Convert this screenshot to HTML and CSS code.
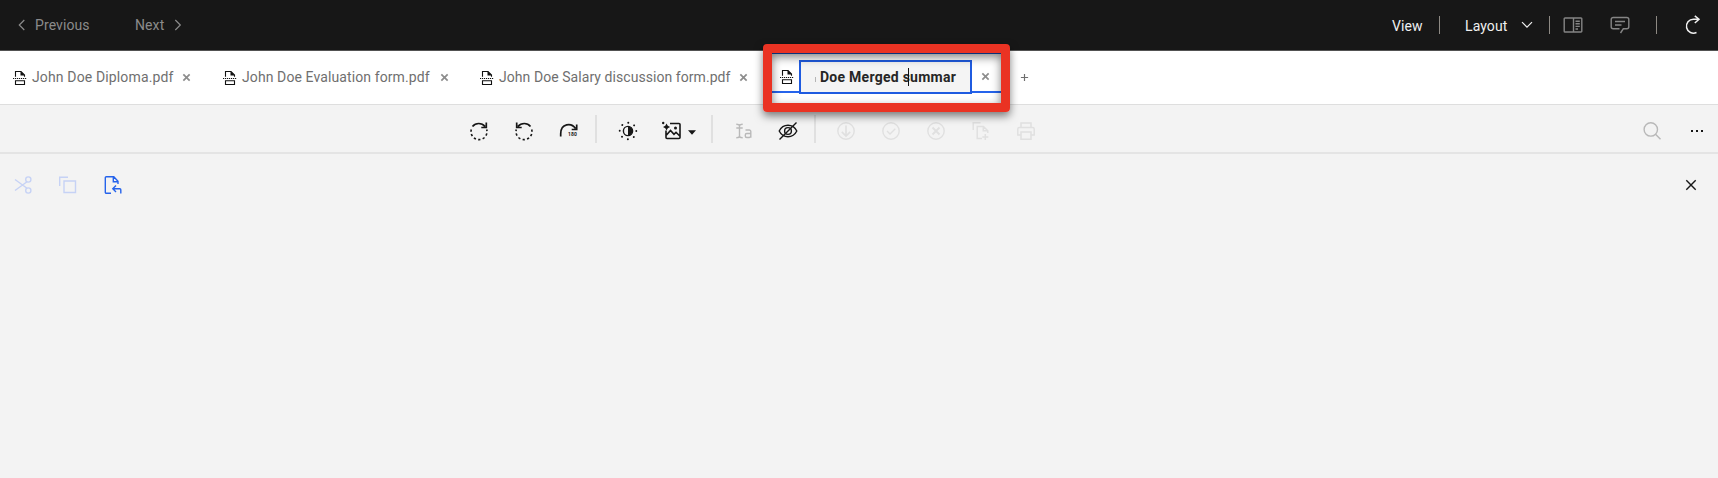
FILE: index.html
```html
<!DOCTYPE html>
<html lang="en">
<head>
<meta charset="utf-8">
<title>Document viewer</title>
<link rel="stylesheet" href="styles.css">
</head>
<body>
<svg class="defs" width="0" height="0" aria-hidden="true">
  <symbol id="split" viewBox="0 0 16 16">
    <path d="M3.500 6.800V1.500h5.500l3.500 3.500v1.800" fill="none" stroke="#111" stroke-width="1.100"/>
    <path d="M8.500 1l4.500 4.500H8.500z" fill="#111" stroke="none"/>
    <path d="M1 8.500h14" stroke="#111" stroke-width="1" stroke-dasharray="1.200 .8"/>
    <path d="M3.500 10.800v3.700h9v-3.700z" fill="none" stroke="#111" stroke-width="1.100"/>
  </symbol>
  <symbol id="x" viewBox="0 0 10 10"><path d="M1.500 1.500l7 7M8.500 1.500l-7 7" fill="none" stroke="currentColor" stroke-width="1.900"/></symbol>
</svg>

<header class="topbar">
  <nav class="pager">
    <svg class="chev" viewBox="0 0 8 12"><path d="M6.300 1L1.300 6l5 5"/></svg>
    <span class="prev">Previous</span>
    <span class="next">Next</span>
    <svg class="chev" viewBox="0 0 8 12"><path d="M1.300 1l5 5-5 5"/></svg>
  </nav>
  <div class="actions">
    <span class="view">View</span>
    <i class="bar bar-view"></i>
    <span class="layout">Layout</span>
    <svg class="down" viewBox="0 0 12 8"><path d="M1 1.200l5 5 5-5"/></svg>
    <i class="bar bar-layout"></i>
    <svg class="top-icon book" viewBox="0 0 20 20"><path d="M2 3h16a.8.8 0 0 1 .8.8v12.400a.8.8 0 0 1-.8.8H2a.8.8 0 0 1-.8-.8V3.800A.8.8 0 0 1 2 3zM10.500 3v14M12.500 6.200h4.300M12.500 8.800h4.300M12.500 11.400h4.300M12.500 14h2.500"/></svg>
    <svg class="top-icon comment" viewBox="0 0 20 20"><path d="M10.500 18l2.800-4.200h3.500a2 2 0 0 0 2-2V4.500a2 2 0 0 0-2-2H3.200a2 2 0 0 0-2 2v7.300a2 2 0 0 0 2 2H9.500M5 6.500h10M5 10h6.500"/></svg>
    <i class="bar bar-redo"></i>
    <svg class="redo" viewBox="0 0 20 20"><path d="M13.500 17.500a7 7 0 1 1-3-13.300h5.500M11.800.8l4.200 3.400-4.200 3.800"/></svg>
  </div>
</header>

<section class="tabs">
  <div class="tab t1"><svg class="doc"><use href="#split"/></svg><span>John Doe Diploma.pdf</span><svg class="close"><use href="#x"/></svg></div>
  <div class="tab t2"><svg class="doc"><use href="#split"/></svg><span>John Doe Evaluation form.pdf</span><svg class="close"><use href="#x"/></svg></div>
  <div class="tab t3"><svg class="doc"><use href="#split"/></svg><span>John Doe Salary discussion form.pdf</span><svg class="close"><use href="#x"/></svg></div>
  <div class="tab active"><svg class="doc"><use href="#split"/></svg><div class="field"><i class="clipped"></i><span>Doe Merged summar</span><i class="caret"></i></div><svg class="close"><use href="#x"/></svg></div>
  <svg class="add" viewBox="0 0 10 10"><path d="M5 1v8M1 5h8"/></svg>
  <div class="highlight"></div>
</section>

<section class="toolbar">
  <div class="group rotate">
    <svg viewBox="0 0 20 20"><path d="M3.500 5.500A8 8 0 0 1 16 5.500M17.300 1.500v5h-5" stroke-width="1.700"/><path d="M2.300 8.500A8 8 0 1 0 17.700 8.500" stroke-dasharray="2.300 2.300" stroke-width="1.600"/></svg>
    <svg viewBox="0 0 20 20"><path d="M16.500 5.500A8 8 0 0 0 4 5.500M2.700 1.500v5h5" stroke-width="1.700"/><path d="M17.700 8.500A8 8 0 1 1 2.300 8.500" stroke-dasharray="2.300 2.300" stroke-width="1.600"/></svg>
    <svg viewBox="0 0 20 20"><path d="M1.700 15.500v-2.700C1.700 2 12.500 1.500 16.600 7.500M17.700 3.500v5h-5" stroke-width="1.700"/><text x="9" y="15" class="deg">180</text></svg>
  </div>
  <i class="rule"></i>
  <div class="group adjust">
    <svg viewBox="0 0 20 20"><circle cx="10" cy="10" r="4.600"/><path class="solid" d="M10 5.400a4.600 4.600 0 0 1 0 9.200z"/><circle cx="10" cy="10" r="8.300" stroke-width="1.900" stroke-linecap="round" stroke-dasharray=".1 6.418"/></svg>
    <svg viewBox="0 0 20 20"><path d="M8 2.500h9a1 1 0 0 1 1 1V16.500a1 1 0 0 1-1 1H5a1 1 0 0 1-1-1V9.500M4.500 14l4-4.500 3.500 3.800 2-2 3.500 3.500" stroke-width="1.600"/><circle class="solid" cx="13.500" cy="7" r="1.500"/><path class="solid" d="M4.500 2.500l1.300 2.300 2.300 1.200-2.300 1.200-1.300 2.300-1.200-2.300L1 6l2.300-1.200z"/><circle class="solid" cx="1.200" cy="2" r="1.200"/></svg>
    <svg class="menu-caret" viewBox="0 0 8 5"><path class="solid" d="M0 .3h8L4 4.700z"/></svg>
  </div>
  <i class="rule"></i>
  <div class="group visibility">
    <svg class="faded" viewBox="0 0 20 20"><path d="M2.300 3.200c2 0 3.200.6 3.200 1.800v10c0 1.200-1.200 1.800-3.200 1.800M8.700 3.200c-2 0-3.200.6-3.200 1.800v10c0 1.200 1.200 1.800 3.200 1.800M2.300 7h6.400M11.500 9h3.800a1.500 1.500 0 0 1 1.500 1.500v6.300M16.800 12.500h-4a1.500 1.500 0 0 0-1.500 1.500v1a1.500 1.500 0 0 0 1.500 1.500h2.500l1.500-1"/></svg>
    <svg viewBox="0 0 20 20"><path d="M1.200 10C5 2.400 15 2.400 18.800 10 15 17.600 5 17.600 1.200 10zM1.500 18.500l17-17"/><circle cx="10" cy="10" r="3.400"/></svg>
  </div>
  <i class="rule"></i>
  <div class="group disabled">
    <svg viewBox="0 0 20 20"><circle cx="10" cy="10" r="8.200"/><path d="M10 4.500v10.500M5.800 10.800L10 15l4.200-4.200" stroke-width="1.700"/></svg>
    <svg viewBox="0 0 20 20"><circle cx="10" cy="10" r="8.200"/><path d="M6 10l3 3 5.300-5.300"/></svg>
    <svg viewBox="0 0 20 20"><circle cx="10" cy="10" r="8.200"/><path d="M6.500 6.500l7 7m0-7l-7 7" stroke-width="2"/></svg>
    <svg viewBox="0 0 20 20"><path d="M2.200 9V1.800h7.300M11 17.500H6.200V5.500h6.300l4.300 4.300V12M12.300 5.500v4.300h4.500M14.300 13v6M11.300 16h6" stroke-width="1.500"/></svg>
    <svg viewBox="0 0 20 20"><path d="M5 6.500V2h10v4.500M5 14H1.800V8a1.500 1.500 0 0 1 1.500-1.500h13.400A1.500 1.500 0 0 1 18.200 8v6H15M5 11h10v7.300H5z" stroke-width="1.500"/></svg>
  </div>
  <svg class="search" viewBox="0 0 20 20"><circle cx="8.800" cy="8.400" r="6.700"/><path d="M13.500 13.200l5 5"/></svg>
  <svg class="more" viewBox="0 0 14 4"><path class="solid" d="M1 1h2v2H1zM6 1h2v2H6zM11 1h2v2h-2z"/></svg>
</section>

<main class="panel">
  <svg class="pale" viewBox="0 0 20 20"><path d="M2 4.500l12 8.700M2 15.500l12-8.700"/><circle cx="15.300" cy="4.500" r="2.600"/><circle cx="15.300" cy="15.500" r="2.600"/></svg>
  <svg class="pale copy" viewBox="0 0 20 20"><path d="M1.700 11V2.300H10M6 6h11.500v11.500H6z"/></svg>
  <svg class="blue" viewBox="0 0 20 20"><path d="M8 18.300H3.300a1 1 0 0 1-1-1V2.700a1 1 0 0 1 1-1h7.500L15 6.300V9M10.300 1.700v5H15M17.800 18.500v-3.700a1 1 0 0 0-1-1H10M13 10.500l-3.200 3.300L13 17"/></svg>
  <svg class="dismiss" viewBox="0 0 12 12"><path d="M1.300 1.300l9.400 9.400m0-9.400l-9.400 9.400"/></svg>
</main>
</body>
</html>
```
FILE: styles.css
```css
* { box-sizing: border-box; }
body { margin: 0; height: 478px; overflow: hidden; background: #f3f3f3; font-family: Roboto, "Liberation Sans", sans-serif; font-size: 14px; letter-spacing: .1px; }
.defs { position: absolute; }
svg { flex: none; display: block; fill: none; stroke: currentColor; stroke-width: 1.4; }
.solid { fill: currentColor; stroke: none; }
span { white-space: nowrap; flex: none; }

.topbar { height: 51px; background: #171717; border-bottom: 1px solid #525252; display: flex; justify-content: space-between; color: #8b8b8b; }
.pager { display: flex; align-items: center; padding-left: 18px; }
.chev { width: 8px; height: 12px; stroke-width: 1.2; margin-top: -1px; }
.prev { width: 54px; margin-left: 9px; }
.next { width: 28px; margin: 0 11px 0 46px; }
.actions { display: flex; align-items: center; width: 326px; color: #f0f0f0; }
.view { width: 31px; margin-top: 1px; }
.layout { width: 43px; margin-top: 2px; }
.bar { width: 1px; height: 18px; flex: none; background: #8d8983; }
.bar-view { margin: 0 25px 0 16px; }
.down { width: 12px; height: 8px; margin-left: 13px; stroke-width: 1.2; }
.bar-layout { margin-left: 16px; }
.top-icon { width: 20px; height: 20px; color: #858585; }
.book { margin-left: 13px; }
.comment { margin-left: 27px; }
.bar-redo { margin-left: 26px; }
.redo { width: 20px; height: 20px; margin-left: 26px; stroke-width: 1.5; }

.tabs { position: relative; height: 54px; background: #fff; border-bottom: 1px solid #dedede; display: flex; align-items: center; color: #6f6f6f; padding-left: 12px; }
.tab { display: flex; align-items: center; height: 40px; }
.doc { width: 16px; height: 16px; }
.tab > span { margin-left: 4px; margin-top: -2px; }
.close { width: 9px; height: 9px; margin-left: 9px; color: #8d8d8d; }
.t1 > span { width: 141px; letter-spacing: .14px; }
.t2 { margin-left: 31px; }
.t2 > span { width: 189px; }
.t3 { margin-left: 30px; }
.t3 > span { width: 231px; letter-spacing: .06px; }
.active { align-self: flex-start; width: 229px; margin: 2px 0 0 24px; padding: 8px 0 0 7px; border-top: 1px solid #0f52c8; border-bottom: 2px solid #2563eb; }
.field { position: relative; width: 173px; height: 34px; margin-left: 4px; flex: none; padding: 7px 0 0 19px; border: 2px solid #1f5be0; background: #f4f4f4; color: #262626; font-weight: 700; }
.field span { display: block; line-height: 16px; letter-spacing: .26px; }
.clipped { position: absolute; left: 14px; top: 15px; width: 1px; height: 5px; background: #b5b5b5; }
.caret { position: absolute; left: 107px; top: 6px; width: 1px; height: 18px; background: #111; }
.active .close { margin-left: 9px; }
.add { width: 9px; height: 9px; margin-left: 19px; margin-top: -1px; stroke-width: 1.3; }
.highlight { position: absolute; z-index: 2; left: 763px; top: -7px; width: 247px; height: 68px; border: 9px solid #ea3323; border-radius: 4px; box-shadow: 0 4px 9px rgba(0, 0, 0, .5), inset 0 4px 10px rgba(0, 0, 0, .5); }

.toolbar { height: 49px; border-bottom: 2px solid #e4e4e4; background: #f3f3f3; display: flex; align-items: center; color: #161616; padding-top: 5px; }
.group { display: flex; align-items: center; gap: 25px; }
.group svg { width: 20px; height: 20px; }
.rotate { margin-left: 469px; }
.rule { width: 2px; height: 28px; flex: none; background: #e0e0e0; margin-left: 16px; margin-top: -5px; }
.deg { font: 700 5px Roboto, sans-serif; fill: currentColor; stroke: none; }
.adjust { margin-left: 21px; gap: 24px; }
.group .menu-caret { width: 8px; height: 5px; margin: 3px 0 0 -18px; }
.adjust + .rule { margin-left: 15px; }
.visibility { margin-left: 21px; gap: 24px; }
.faded { color: #b9b9b9; }
.disabled { margin-left: 20px; color: #e0e0e0; }
.search { width: 20px; height: 20px; margin-left: auto; color: #b8b8b8; }
.more { width: 14px; height: 4px; margin: 0 14px 0 28px; }

.panel { display: flex; align-items: center; gap: 25px; height: 62px; padding: 0 21px 0 13px; }
.panel svg { width: 20px; height: 20px; }
.pale { color: #c6d2f5; }
.blue { color: #2563eb; }
.panel .dismiss { width: 12px; height: 12px; margin-left: auto; color: #161616; }
```
